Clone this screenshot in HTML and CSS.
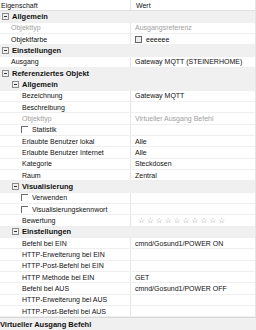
FILE: index.html
```html
<!DOCTYPE html>
<html lang="de">
<head>
    <meta charset="UTF-8">
    <title>Eigenschaften</title>
    <link rel="stylesheet" href="styles.css">
</head>
<body>
    <div class="grid">
        <div class="row head">
            <div class="name">Eigenschaft</div>
            <div class="val">Wert</div>
        </div>

        <div class="row group">
            <div class="name l1"><span class="tog"></span>Allgemein</div>
            <div class="val"></div>
        </div>
        <div class="row">
            <div class="name l1 off">Objekttyp</div>
            <div class="val off">Ausgangsreferenz</div>
        </div>
        <div class="row">
            <div class="name l1">Objektfarbe</div>
            <div class="val"><span class="swatch"></span>eeeeee</div>
        </div>

        <div class="row group">
            <div class="name l1"><span class="tog"></span>Einstellungen</div>
            <div class="val"></div>
        </div>
        <div class="row">
            <div class="name l1">Ausgang</div>
            <div class="val">Gateway MQTT (STEINERHOME)</div>
        </div>

        <div class="row group">
            <div class="name l1"><span class="tog"></span>Referenziertes Objekt</div>
            <div class="val"></div>
        </div>
        <div class="row group">
            <div class="name l2"><span class="tog"></span>Allgemein</div>
            <div class="val"></div>
        </div>
        <div class="row">
            <div class="name l2">Bezeichnung</div>
            <div class="val">Gateway MQTT</div>
        </div>
        <div class="row">
            <div class="name l2">Beschreibung</div>
            <div class="val"></div>
        </div>
        <div class="row">
            <div class="name l2 off">Objekttyp</div>
            <div class="val off">Virtueller Ausgang Befehl</div>
        </div>
        <div class="row">
            <div class="name l2"><span class="chk"></span>Statistik</div>
            <div class="val"></div>
        </div>
        <div class="row">
            <div class="name l2">Erlaubte Benutzer lokal</div>
            <div class="val">Alle</div>
        </div>
        <div class="row">
            <div class="name l2">Erlaubte Benutzer Internet</div>
            <div class="val">Alle</div>
        </div>
        <div class="row">
            <div class="name l2">Kategorie</div>
            <div class="val">Steckdosen</div>
        </div>
        <div class="row">
            <div class="name l2">Raum</div>
            <div class="val">Zentral</div>
        </div>

        <div class="row group">
            <div class="name l2"><span class="tog"></span>Visualisierung</div>
            <div class="val"></div>
        </div>
        <div class="row">
            <div class="name l2"><span class="chk"></span>Verwenden</div>
            <div class="val"></div>
        </div>
        <div class="row">
            <div class="name l2"><span class="chk"></span>Visualisierungskennwort</div>
            <div class="val"></div>
        </div>
        <div class="row">
            <div class="name l2">Bewertung</div>
            <div class="val stars">☆☆☆☆☆☆☆☆☆☆</div>
        </div>

        <div class="row group">
            <div class="name l2"><span class="tog"></span>Einstellungen</div>
            <div class="val"></div>
        </div>
        <div class="row">
            <div class="name l2">Befehl bei EIN</div>
            <div class="val">cmnd/Gosund1/POWER ON</div>
        </div>
        <div class="row">
            <div class="name l2">HTTP-Erweiterung bei EIN</div>
            <div class="val"></div>
        </div>
        <div class="row">
            <div class="name l2">HTTP-Post-Befehl bei EIN</div>
            <div class="val"></div>
        </div>
        <div class="row">
            <div class="name l2">HTTP Methode bei EIN</div>
            <div class="val">GET</div>
        </div>
        <div class="row">
            <div class="name l2">Befehl bei AUS</div>
            <div class="val">cmnd/Gosund1/POWER OFF</div>
        </div>
        <div class="row">
            <div class="name l2">HTTP-Erweiterung bei AUS</div>
            <div class="val"></div>
        </div>
        <div class="row">
            <div class="name l2">HTTP-Post-Befehl bei AUS</div>
            <div class="val"></div>
        </div>
    </div>
    <div class="footer">Virtueller Ausgang Befehl</div>
</body>
</html>
```

FILE: styles.css
```css
body {
    margin: 0;
    font-family: "Liberation Sans", Arial, sans-serif;
    font-size: 7px;
    color: #111;
    background: #fff;
    width: 256px;
    height: 330px;
    overflow: hidden;
}
.grid {
    border-right: 1px solid #e4e4e4;
}
.row {
    display: grid;
    grid-template-columns: 131px 1fr;
    height: 11.33px;
    box-sizing: border-box;
    border-bottom: 1px solid #efefef;
}
.name, .val {
    display: flex;
    align-items: center;
    white-space: nowrap;
    overflow: hidden;
}
.name {
    border-right: 1px solid #e6e6e6;
}
.val {
    padding-left: 4px;
}
.head {
    border-bottom: 1px solid #e0e0e0;
}
.head .name {
    padding-left: 1px;
}
.head .val {
    padding-left: 5px;
}
.group {
    background: #f0f0f0;
}
.group .name {
    font-weight: bold;
    font-size: 7.5px;
    border-right: none;
}
.l1 {
    padding-left: 11px;
}
.l2 {
    padding-left: 22px;
}
.group .l1 {
    padding-left: 2px;
}
.group .l2 {
    padding-left: 12px;
}
.off {
    color: #a0a0a0;
}
.tog {
    width: 5px;
    height: 5px;
    border: 1px solid #8c8c8c;
    margin-right: 3px;
    position: relative;
    flex: none;
}
.tog::after {
    content: "";
    position: absolute;
    left: 1px;
    top: 2px;
    width: 3px;
    height: 1px;
    background: #333;
}
.chk {
    width: 6px;
    height: 6px;
    border-top: 1px solid #6a6a6a;
    border-left: 1px solid #6a6a6a;
    margin-left: -1px;
    margin-right: 4px;
    flex: none;
}
.swatch {
    width: 5px;
    height: 5px;
    border: 1px solid #666;
    background: #eee;
    margin: 0 4px 0 0;
    flex: none;
}
.stars {
    color: #8a8a8a;
    font-family: "DejaVu Sans", sans-serif;
    font-size: 7.5px;
    letter-spacing: 2.2px;
    padding-left: 7px;
}
.footer {
    height: 13px;
    border-top: 1px solid #d8d8d8;
    background: #f0f0f0;
    font-weight: bold;
    font-size: 7.5px;
    display: flex;
    align-items: center;
}
```
